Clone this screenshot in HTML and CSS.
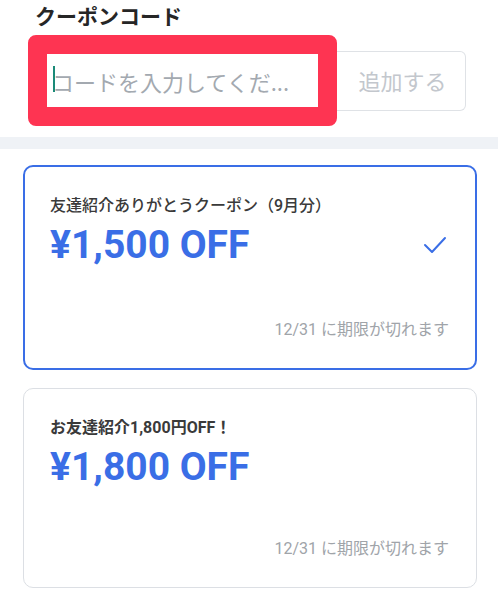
FILE: index.html
```html
<!DOCTYPE html>
<html lang="ja">
<head>
    <meta charset="UTF-8">
    <meta name="viewport" content="width=device-width, initial-scale=1.0">
    <title>クーポンコード</title>
    <link rel="stylesheet" href="styles.css">
</head>
<body>

<section class="code-section">
    <h2 class="code-title">クーポンコード</h2>
    <div class="code-row">
        <div class="code-mark">
            <div class="code-field">
                <span class="caret"></span>
                <input type="text" class="code-input" placeholder="コードを入力してくだ...">
            </div>
        </div>
        <button class="add-button">追加する</button>
    </div>
</section>

<div class="divider"></div>

<div class="coupon-list">
    <div class="coupon selected">
        <div class="coupon-name">友達紹介ありがとうクーポン（9月分）</div>
        <div class="coupon-amount">
            <span>¥1,500 OFF</span>
            <svg class="check" width="24" height="18" viewBox="0 0 24 18">
                <path d="M2 9 L9 16 L22 2" fill="none" stroke="#3a6ee6" stroke-width="2" stroke-linecap="round" stroke-linejoin="round"/>
            </svg>
        </div>
        <div class="coupon-expire">12/31 に期限が切れます</div>
    </div>

    <div class="coupon">
        <div class="coupon-name bold">お友達紹介1,800円OFF！</div>
        <div class="coupon-amount">
            <span>¥1,800 OFF</span>
        </div>
        <div class="coupon-expire">12/31 に期限が切れます</div>
    </div>
</div>

</body>
</html>
```

FILE: styles.css
```css
body {
    margin: 0;
    font-family: Roboto, "Noto Sans CJK JP", sans-serif;
    background-color: #fff;
    color: #333;
}
.code-section {
    padding: 2px 32px 11px 28px;
}
.code-title {
    margin: 0 0 3px 7px;
    font-size: 21px;
    line-height: 30px;
    font-weight: 700;
    color: #262626;
}
.code-row {
    display: flex;
    align-items: center;
}
.code-mark {
    width: 271px;
    border: 19px solid #fe3452;
    border-radius: 8px;
    background-color: #fff;
    position: relative;
    z-index: 1;
}
.code-field {
    position: relative;
    height: 53px;
    display: flex;
    align-items: center;
}
.code-input {
    width: 100%;
    border: none;
    outline: none;
    padding: 0 0 0 5px;
    font-family: "Noto Sans CJK JP", sans-serif;
    font-size: 22px;
    color: #333;
    background: transparent;
}
.code-input::placeholder {
    color: #a3a9b0;
}
.caret {
    position: absolute;
    left: 6px;
    top: 12px;
    width: 2px;
    height: 26px;
    background-color: #1b8a78;
}
.add-button {
    flex: 1;
    height: 60px;
    margin-left: -3px;
    border: 1px solid #dfe2e6;
    border-left: none;
    border-radius: 0 6px 6px 0;
    background-color: #fff;
    font-family: "Noto Sans CJK JP", sans-serif;
    font-size: 22px;
    color: #c3c7cd;
    padding: 0 0 2px 6px;
}
.divider {
    height: 12px;
    background-color: #eff2f6;
}
.coupon-list {
    padding: 16px 21px 0 23px;
}
.coupon {
    border: 1px solid #dcdfe4;
    border-radius: 10px;
    padding: 27px 27px 25px 26px;
    margin-bottom: 18px;
    height: 146px;
}
.coupon.selected {
    border: 2px solid #3a6ee6;
    padding: 27px 26px 24px 25px;
    height: 150px;
}
.coupon-name {
    font-size: 16px;
    line-height: 24px;
    font-weight: 500;
    color: #3a3a3a;
}
.coupon-name.bold {
    font-weight: 700;
    font-size: 16px;
}
.coupon-amount {
    display: flex;
    justify-content: space-between;
    align-items: center;
    margin-top: 2px;
    font-size: 39px;
    line-height: 50px;
    font-weight: 700;
    color: #3a6ee6;
}
.check {
    margin-right: 2px;
}
.coupon-expire {
    margin-top: 48px;
    text-align: right;
    font-size: 16px;
    line-height: 24px;
    color: #a0a4a9;
}
.coupon:not(.selected) .coupon-expire {
    margin-top: 45px;
}
```
